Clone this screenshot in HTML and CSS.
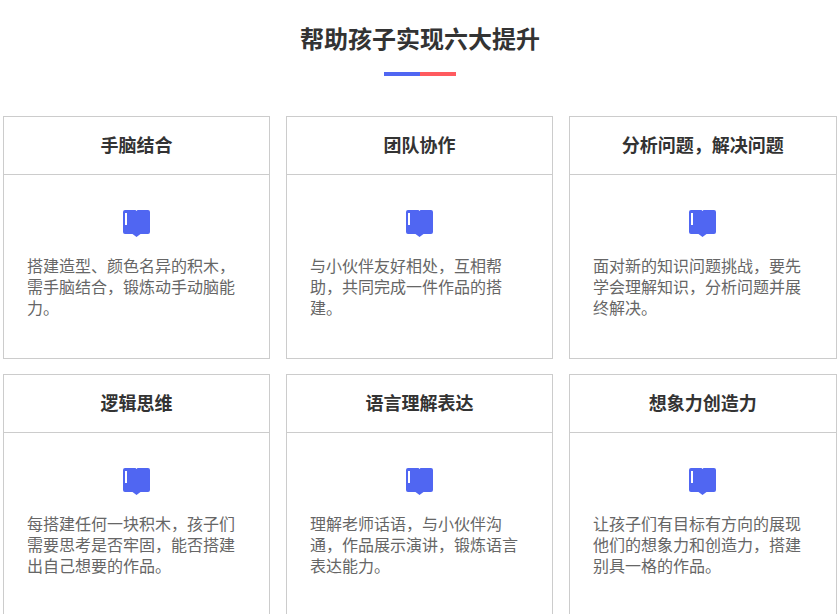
FILE: index.html
```html
<!DOCTYPE html>
<html lang="zh-CN">
<head>
<meta charset="utf-8">
<title>帮助孩子实现六大提升</title>
<link rel="stylesheet" href="styles.css">
</head>
<body>
<svg class="defs" width="0" height="0" aria-hidden="true"><symbol id="book" viewBox="0 0 27 27"><path d="M2 0H12.5L13.5 1L14.5 0H25A2 2 0 0 1 27 2V22A2 2 0 0 1 25 24H17.5L13.5 27L9.5 24H2A2 2 0 0 1 0 22V2A2 2 0 0 1 2 0Z" fill="#5066f2"/><rect x="2" y="3" width="2" height="12" fill="#fff"/></symbol></svg>
<main class="page">
  <h1 class="title">帮助孩子实现六大提升</h1>
  <div class="rule"><span class="rule-blue"></span><span class="rule-red"></span></div>
  <section class="grid">
    <article class="card"><h2 class="card-title">手脑结合</h2><div class="card-body"><svg class="icon"><use href="#book"/></svg><p class="card-text">搭建造型、颜色名异的积木，需手脑结合，锻炼动手动脑能力。</p></div></article>
    <article class="card"><h2 class="card-title">团队协作</h2><div class="card-body"><svg class="icon"><use href="#book"/></svg><p class="card-text">与小伙伴友好相处，互相帮助，共同完成一件作品的搭建。</p></div></article>
    <article class="card"><h2 class="card-title">分析问题，解决问题</h2><div class="card-body"><svg class="icon"><use href="#book"/></svg><p class="card-text">面对新的知识问题挑战，要先学会理解知识，分析问题并展终解决。</p></div></article>
    <article class="card"><h2 class="card-title">逻辑思维</h2><div class="card-body"><svg class="icon"><use href="#book"/></svg><p class="card-text">每搭建任何一块积木，孩子们需要思考是否牢固，能否搭建出自己想要的作品。</p></div></article>
    <article class="card"><h2 class="card-title">语言理解表达</h2><div class="card-body"><svg class="icon"><use href="#book"/></svg><p class="card-text">理解老师话语，与小伙伴沟通，作品展示演讲，锻炼语言表达能力。</p></div></article>
    <article class="card"><h2 class="card-title">想象力创造力</h2><div class="card-body"><svg class="icon"><use href="#book"/></svg><p class="card-text">让孩子们有目标有方向的展现他们的想象力和创造力，搭建别具一格的作品。</p></div></article>
  </section>
</main>
</body>
</html>
```
FILE: styles.css
```css
html, body {
  margin: 0;
  padding: 0;
  background: #fff;
}
body {
  height: 614px;
  overflow: hidden;
  font-family: "Noto Sans CJK SC", "Liberation Sans", sans-serif;
}
.defs {
  display: block;
  height: 0;
}
.page {
  padding: 21px 0 0 3px;
}
.title {
  margin: 0;
  height: 34px;
  line-height: 34px;
  font-size: 24px;
  font-weight: 700;
  color: #333;
  text-align: center;
}
.rule {
  display: flex;
  justify-content: center;
  margin-top: 17px;
  height: 4px;
}
.rule-blue, .rule-red {
  width: 36px;
}
.rule-blue { background: #5066f2; }
.rule-red { background: #ff5a5f; }
.grid {
  display: grid;
  grid-template-columns: 267px 267px 267.5px;
  grid-auto-rows: 243px;
  column-gap: 16px;
  row-gap: 15px;
  margin-top: 40px;
}
.card {
  border: 1px solid #ccc;
  box-sizing: border-box;
}
.card-title {
  margin: 0;
  height: 57px;
  line-height: 55px;
  font-size: 18px;
  font-weight: 700;
  color: #333;
  text-align: center;
  border-bottom: 1px solid #ccc;
}
.card-body {
  display: flex;
  flex-direction: column;
  padding: 35px 23px 0;
}
.icon {
  display: block;
  width: 27px;
  height: 27px;
  align-self: center;
}
.card-text {
  margin: 18px 0 0;
  font-size: 16px;
  line-height: 21px;
  color: #666;
}
```
